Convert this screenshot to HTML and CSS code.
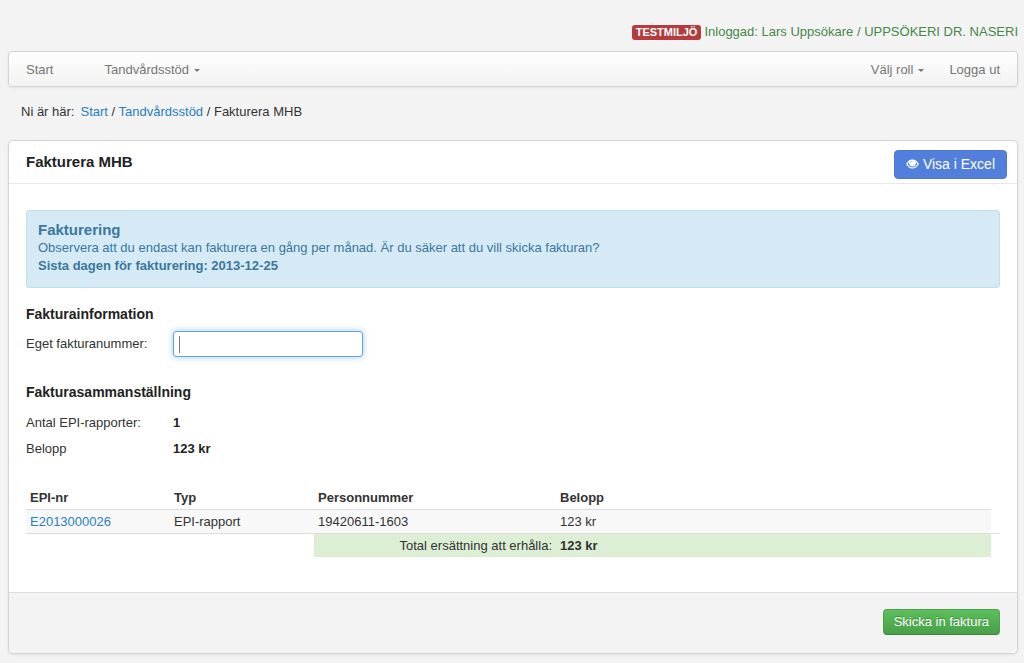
FILE: index.html
```html
<!DOCTYPE html>
<html lang="sv">
<head>
<meta charset="utf-8">
<meta name="viewport" content="width=device-width, initial-scale=1">
<title>Fakturera MHB</title>
<link rel="stylesheet" href="styles.css">
</head>
<body class="page">
<header class="status">
  <span class="badge">TESTMILJÖ</span>
  <span class="status-text">Inloggad: Lars Uppsökare / UPPSÖKERI DR. NASERI</span>
</header>
<nav class="navbar">
  <a class="nav-link nav-start" href="#">Start</a>
  <button class="nav-link" type="button">Tandvårdsstöd<span class="caret"></span></button>
  <button class="nav-link nav-right" type="button">Välj roll<span class="caret"></span></button>
  <a class="nav-link" href="#">Logga ut</a>
</nav>
<nav class="breadcrumb">
  <span class="breadcrumb-label">Ni är här:</span>
  <span><a class="link" href="#">Start</a> / <a class="link" href="#">Tandvårdsstöd</a> / Fakturera MHB</span>
</nav>
<main class="panel">
  <header class="panel-header">
    <h1 class="panel-title">Fakturera MHB</h1>
    <button class="btn btn-primary" type="button">
      <svg class="eye" viewBox="0 0 26 20" aria-hidden="true">
        <path fill="currentColor" fill-rule="evenodd" d="M13 1C7 1 3 5 0 10c3 5 7 9 13 9s10-4 13-9C23 5 19 1 13 1zM3 10.500C4 8.500 5 7 6.500 5.500a7 7 0 1 0 13 0C21 7 22 8.500 23 10.500 20 14.500 17 17 13 17S6 14.500 3 10.500zM13 4a4 4 0 0 0-4 4h2a2 2 0 0 1 2-2z"/>
        <circle cx="14" cy="9" r="4.500" fill="currentColor"/>
      </svg>
      Visa i Excel
    </button>
  </header>
  <div class="panel-body">
    <section class="alert">
      <h2 class="alert-title">Fakturering</h2>
      <p class="alert-text">Observera att du endast kan fakturera en gång per månad. Är du säker att du vill skicka fakturan?</p>
      <p class="alert-text"><strong>Sista dagen för fakturering: 2013-12-25</strong></p>
    </section>
    <h2 class="section-title">Fakturainformation</h2>
    <div class="form-row">
      <label for="invoice-number">Eget fakturanummer:</label>
      <input class="text-input" id="invoice-number" type="text" autofocus>
    </div>
    <h2 class="section-title">Fakturasammanställning</h2>
    <dl class="summary">
      <dt>Antal EPI-rapporter:</dt><dd>1</dd>
      <dt>Belopp</dt><dd>123 kr</dd>
    </dl>
    <table class="reports">
      <colgroup><col class="col-short"><col class="col-short"><col class="col-person"><col><col class="col-edge"></colgroup>
      <thead>
        <tr><th scope="col">EPI-nr</th><th scope="col">Typ</th><th scope="col">Personnummer</th><th scope="col">Belopp</th><td></td></tr>
      </thead>
      <tbody>
        <tr><td class="cell"><a class="link" href="#">E2013000026</a></td><td class="cell">EPI-rapport</td><td class="cell">19420611-1603</td><td class="cell">123 kr</td><td></td></tr>
      </tbody>
      <tfoot>
        <tr><td colspan="2"></td><td class="total total-label">Total ersättning att erhålla:</td><td class="total"><strong>123 kr</strong></td><td></td></tr>
      </tfoot>
    </table>
  </div>
  <footer class="panel-footer">
    <button class="btn btn-success" type="button">Skicka in faktura</button>
  </footer>
</main>
</body>
</html>
```
FILE: styles.css
```css
* { box-sizing: border-box; }

.page {
  margin: 0;
  padding: 23px 6px 9px 8px;
  background: #f3f3f3;
  color: #333;
  font: 13px/18px "Liberation Sans", Arial, sans-serif;
}

.status {
  display: flex;
  justify-content: flex-end;
  align-items: center;
  gap: 3px;
  color: #468847;
  margin-bottom: 10px;
}
.badge {
  padding: 1px 4px;
  border-radius: 3px;
  background: #b53b3d;
  color: #fff;
  font-size: 11px;
  font-weight: bold;
  line-height: 13px;
}

.navbar {
  display: flex;
  align-items: center;
  padding: 9px 17px 7px;
  border: 1px solid #d4d4d4;
  border-radius: 4px;
  background: linear-gradient(#fff, #f2f2f2);
  box-shadow: 0 1px 3px rgba(0, 0, 0, 0.07);
  gap: 25px;
}
.nav-link {
  display: flex;
  align-items: center;
  padding: 0;
  border: 0;
  background: none;
  color: #777;
  font: inherit;
  text-decoration: none;
}
.nav-start { margin-right: 26px; }
.nav-right { margin-left: auto; }
.caret {
  margin-left: 5px;
  border: 3px solid transparent;
  border-top-color: #777;
  border-bottom: 0;
}

.breadcrumb {
  display: flex;
  gap: 6px;
  padding: 16px 13px 19px;
}
.link { color: #2a80bf; text-decoration: none; }

.panel {
  border: 1px solid #d4d4d4;
  border-radius: 5px;
  background: #fff;
  box-shadow: 0 1px 3px rgba(0, 0, 0, 0.08);
}
.panel-header {
  display: flex;
  justify-content: space-between;
  align-items: center;
  padding: 9px 10px 4px 17px;
  border-bottom: 1px solid #e8e8e8;
}
.panel-title {
  margin: 0 0 5px;
  color: #222;
  font-size: 15px;
  line-height: 20px;
}
.panel-body { padding: 26px 17px 35px; }

.btn {
  display: flex;
  align-items: center;
  border: 1px solid transparent;
  border-radius: 4px;
  color: #fff;
  font: inherit;
}
.btn-primary {
  gap: 4px;
  padding: 4px 11px 5px;
  border-color: #4b78d2;
  background: #527fdc;
  font-size: 14px;
  line-height: 18px;
}
.eye { width: 13px; height: 10px; }
.btn-success {
  padding: 3px 10px;
  border-color: #4ba34b #4ba34b #38853a;
  background: linear-gradient(#5bc05b, #499f49);
  text-shadow: 0 -1px 0 rgba(0, 0, 0, 0.25);
}

.alert {
  margin-bottom: 17px;
  padding: 10px 11px 12px;
  border: 1px solid #bce3ec;
  border-radius: 3px;
  background: #d5eaf4;
  color: #3a789f;
}
.alert-title { margin: 0; font-size: 15px; line-height: 18px; }
.alert-text { margin: 0; }
.section-title {
  margin: 0;
  color: #222;
  font-size: 14px;
  line-height: 18px;
}
.form-row {
  display: grid;
  grid-template-columns: 147px 190px;
  align-items: center;
  margin: 8px 0 26px;
}
.text-input {
  width: 100%;
  height: 26px;
  padding: 3px 5px;
  border: 1px solid #ccc;
  border-radius: 3px;
  background: #fff;
  color: #444;
  caret-color: transparent;
  font: inherit;
}
.text-input:focus {
  outline: 0;
  border-color: #66a5e0;
  background: linear-gradient(#777, #777) 5px center / 1px 17px no-repeat #fff;
  box-shadow: 0 0 6px rgba(82, 168, 236, 0.6);
}
.summary {
  display: grid;
  grid-template-columns: 147px 1fr;
  row-gap: 8px;
  margin: 13px 0 28px;
}
.summary dd { margin: 0; color: #222; font-weight: bold; }

.reports {
  width: 100%;
  table-layout: fixed;
  border-collapse: collapse;
}
.col-short { width: 144px; }
.col-person { width: 242px; }
.col-edge { width: 9px; }
.reports th,
.reports td {
  padding: 3px 0 2px 4px;
  text-align: left;
}
.reports .cell { border-top: 1px solid #ddd; background: #f8f8f8; }
.reports tfoot td { border-top: 1px solid #ddd; }
.reports .total { background: #dceed4; }
.reports .total-label { padding-right: 4px; text-align: right; }

.panel-footer {
  display: flex;
  justify-content: flex-end;
  padding: 16px 17px 18px;
  border-top: 1px solid #ddd;
  border-radius: 0 0 5px 5px;
  background: #f3f3f3;
}
```
